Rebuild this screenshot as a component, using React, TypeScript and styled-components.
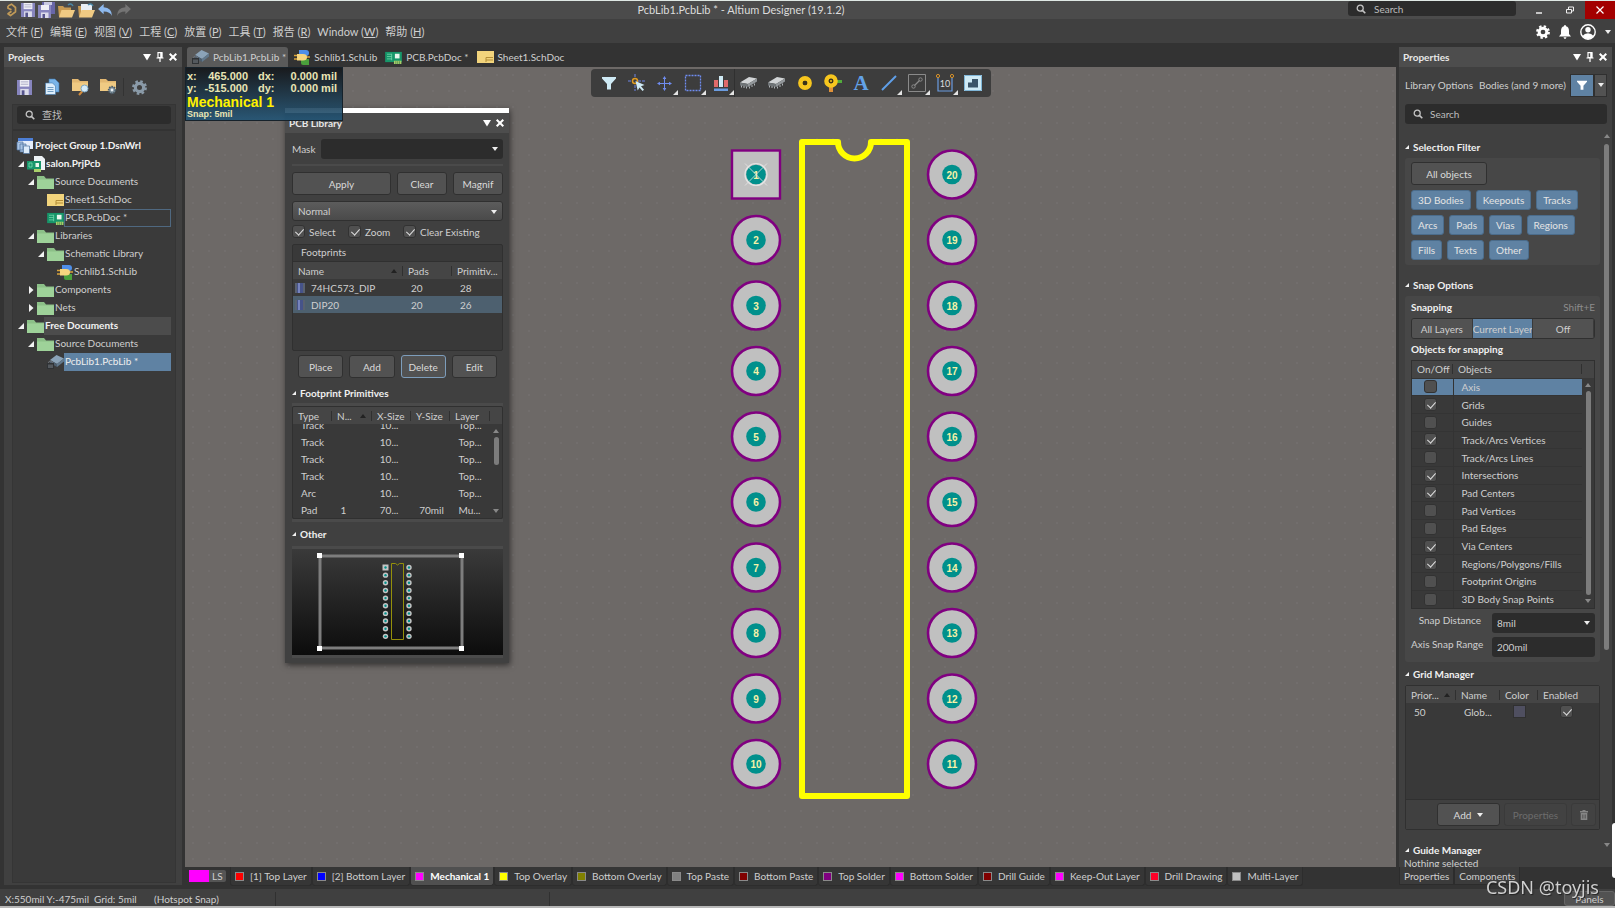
import React from "react";
import styled, { createGlobalStyle, css } from "styled-components";

const c = {
  chrome: "#404040",
  header: "#4d4d4d",
  dark: "#333333",
  deep: "#2c2c2c",
  list: "#393939",
  group: "#474747",
  button: "#525252",
  line: "#303030",
  blue: "#5f82a3",
  text: "#cfcfcf",
  dim: "#8c8c8c",
};

const Global = createGlobalStyle`
  * { box-sizing: border-box; }
  html, body { margin: 0; background: ${c.dark}; }
  body, button, input, select, table {
    font-family: Lato, "Noto Sans CJK SC", sans-serif;
    font-size: 10px;
    line-height: 14px;
    color: ${c.text};
  }
  button, input, select { margin: 0; padding: 0; border: 0; background: none; outline: none; }
  svg { display: block; flex: none; overflow: visible; }
`;

/* ---------- frame ---------- */

const Shell = styled.div`
  display: flex;
  flex-direction: column;
  height: 100vh;
  overflow: hidden;
  background: ${c.dark};
  border-top: 1px solid #dfe8e4;
  border-bottom: 2px solid #b8b8b8;
`;
const TitleBar = styled.header`
  display: grid;
  grid-template-columns: 1fr auto 1fr;
  align-items: center;
  height: 18px;
  flex: none;
  background: #4b4b4b;
`;
const QuickTools = styled.div`
  display: flex;
  align-items: center;
  gap: 3px;
  padding-left: 6px;
`;
const AppTitle = styled.h1`
  margin: 0 0 0 -133px;
  font-size: 11px;
  line-height: 16px;
  font-weight: 400;
  color: #dcdcdc;
`;
const TitleRight = styled.div`
  display: flex;
  justify-content: flex-end;
  align-items: stretch;
  height: 18px;
`;
const TitleSearch = styled.label`
  display: flex;
  align-items: center;
  gap: 8px;
  width: 168px;
  height: 15px;
  padding-left: 8px;
  margin-right: 7px;
  border-radius: 3px;
  background: ${c.deep};
`;
const WindowButton = styled.button<{ $danger?: boolean }>`
  display: flex;
  align-items: center;
  justify-content: center;
  width: ${(p) => (p.$danger ? 30 : 31)}px;
  background: ${(p) => (p.$danger ? "#a30000" : "transparent")};
`;
const MenuBar = styled.nav`
  display: flex;
  align-items: center;
  height: 24px;
  flex: none;
  padding: 1px 4px 0 6px;
  background: ${c.chrome};
`;
const MenuItem = styled.button`
  font-size: 11px;
  line-height: 16px;
  margin-right: 7px;
  white-space: nowrap;
`;
const MenuIcons = styled.div`
  display: flex;
  align-items: center;
  gap: 9px;
  margin-left: auto;
`;
const IconButton = styled.button`
  display: flex;
  align-items: center;
  justify-content: center;
`;
const Main = styled.main`
  display: flex;
  flex: 1;
  min-height: 0;
`;
const StatusBar = styled.footer`
  display: flex;
  align-items: center;
  height: 17px;
  flex: none;
  background: ${c.chrome};
  padding: 2px 0 0 5px;
`;
const StatusItem = styled.span<{ $w: number; $line?: boolean }>`
  width: ${(p) => p.$w}px;
  height: 14px;
  white-space: nowrap;
  border-right: 1px solid ${(p) => (p.$line ? c.line : "transparent")};
`;
const PanelsButton = styled.button`
  width: 51px;
  height: 15px;
  margin-left: auto;
  border: 1px solid #666;
  border-radius: 3px;
  background: ${c.button};
`;

/* ---------- panels ---------- */

const SidePanel = styled.aside<{ $w: number; $left: number }>`
  display: flex;
  flex-direction: column;
  flex: none;
  width: ${(p) => p.$w}px;
  padding: 4px 3px 4px ${(p) => p.$left}px;
`;
const PanelHeader = styled.div`
  display: flex;
  align-items: center;
  gap: 5px;
  height: 20px;
  flex: none;
  padding: 0 5px 0 4px;
  background: ${c.header};
`;
const PanelTitle = styled.h2`
  flex: 1;
  margin: 0;
  font-size: 10px;
  font-weight: 700;
  color: #e8e8e8;
`;
const PanelBody = styled.div`
  display: flex;
  flex-direction: column;
  flex: 1;
  min-height: 0;
  background: ${c.chrome};
`;
const ProjectTools = styled.div`
  display: flex;
  align-items: center;
  height: 37px;
  padding: 3px 0 0 6px;
  & > button { width: 28px; }
`;
const ToolDivider = styled.i`
  width: 1px;
  height: 18px;
  margin: 0 1px;
  background: #333;
`;
const TreeFrame = styled.div`
  flex: 1;
  margin: 0 6px 2px 8px;
  border: 1px solid #353535;
  background: #3a3a3a;
  overflow: hidden;
`;
const SearchField = styled.label<{ $h: number }>`
  display: flex;
  align-items: center;
  gap: 7px;
  height: ${(p) => p.$h}px;
  padding-left: 8px;
  border-radius: 3px;
  background: ${c.deep};
`;
const TextInput = styled.input`
  flex: 1;
  min-width: 0;
  &::placeholder { color: #bdbdbd; opacity: 1; }
`;
const SearchWrap = styled.div`
  padding: 1px 4px 5px;
  margin-bottom: 6px;
  border-bottom: 2px solid #333;
`;
const Tree = styled.ul`
  list-style: none;
  margin: 0;
  padding: 0 4px 0 4px;
`;
const TreeRow = styled.li<{ $level: number }>`
  display: flex;
  align-items: center;
  height: 18px;
  padding-left: ${(p) => p.$level * 10}px;
  white-space: nowrap;
`;
const TreeArrow = styled.span`
  display: flex;
  width: 10px;
  padding-left: 1px;
  flex: none;
`;
const TreeLabel = styled.span<{ $look?: string; $bold?: boolean }>`
  flex: 1;
  height: 18px;
  line-height: 15px;
  overflow: hidden;
  border: 1px solid transparent;
  font-weight: ${(p) => (p.$bold ? 700 : 400)};
  color: ${(p) => (p.$bold ? "#f2f2f2" : c.text)};
  ${(p) => p.$look === "outline" && css`border-color: #4f6880;`}
  ${(p) => p.$look === "shade" && css`background: #4c4c4c;`}
  ${(p) => p.$look === "active" && css`background: ${c.blue}; color: #eee;`}
`;

/* ---------- editor ---------- */

const Editor = styled.section`
  display: flex;
  flex-direction: column;
  flex: 1;
  min-width: 0;
`;
const DocTabs = styled.div`
  display: flex;
  height: 24px;
  flex: none;
  padding: 4px 0 0 2px;
`;
const DocTab = styled.button<{ $active?: boolean }>`
  display: flex;
  align-items: center;
  gap: 4px;
  padding: 0 2px 0 5px;
  margin-right: 1px;
  white-space: nowrap;
  border-radius: 3px 3px 0 0;
  background: ${(p) => (p.$active ? "#5a5a5a" : "transparent")};
`;
const Canvas = styled.div`
  position: relative;
  flex: 1;
  min-height: 0;
  background-color: #6d6967;
  background-image: radial-gradient(circle, #726e6d 0, #726e6d 1px, transparent 1px);
  background-size: 16px 16px;
`;
const Hud = styled.div`
  position: absolute;
  left: 0;
  top: 0;
  z-index: 3;
  width: 158px;
  height: 54px;
  padding: 2px 5px 0 1px;
  border: 1px solid #16222b;
  background: linear-gradient(rgba(22, 24, 27, 0.97), rgba(32, 84, 118, 0.88));
  color: #e9e5b4;
  font-family: "Liberation Sans", sans-serif;
  font-weight: 700;
`;
const HudGrid = styled.div`
  display: grid;
  grid-template-columns: 14px 47px 10px 24px 1fr;
  font-size: 11px;
  line-height: 12px;
  white-space: nowrap;
  & > :nth-child(4n + 2), & > :nth-child(4n) { text-align: right; }
  & > :nth-child(4n + 3) { grid-column: 4; }
`;
const HudLayer = styled.div`
  color: #fff200;
  font-size: 14px;
  line-height: 16px;
`;
const HudSnap = styled.div`
  font-size: 9px;
  line-height: 9px;
`;
const Toolbar = styled.div`
  position: absolute;
  top: 2px;
  left: 50%;
  transform: translateX(-50%);
  display: flex;
  height: 28px;
  padding: 0 4px;
  border-radius: 4px;
  background: #3d3d3d;
`;
const ToolButton = styled.button<{ $menu?: boolean; $divider?: boolean }>`
  position: relative;
  display: flex;
  align-items: center;
  justify-content: center;
  width: 28px;
  height: 28px;
  ${(p) => p.$menu && css`
    &::after {
      content: "";
      position: absolute;
      right: 1px;
      bottom: 2px;
      border-left: 5px solid transparent;
      border-bottom: 5px solid #e4e4e4;
    }
  `}
  ${(p) => p.$divider && css`box-shadow: -1px 0 0 #303030;`}
`;
const Footprint = styled.svg`
  position: absolute;
  left: 544px;
  top: 63px;
`;
const LayerBar = styled.div`
  display: flex;
  align-items: flex-start;
  height: 22px;
  flex: none;
  padding-left: 4px;
`;
const LayerSet = styled.button`
  display: flex;
  height: 12px;
  margin: 3px 4px 0 0;
  line-height: 12px;
  border-radius: 2px;
  background: #555;
`;
const LayerSetColor = styled.i`
  width: 20px;
  height: 12px;
  margin-right: 3px;
  background: #f0f;
`;
const LayerSetName = styled.span`
  width: 14px;
  text-align: left;
`;
const LayerTab = styled.button<{ $active?: boolean }>`
  display: flex;
  align-items: center;
  gap: 6px;
  height: 19px;
  padding: 0 4px;
  white-space: nowrap;
  border-radius: 0 0 3px 3px;
  border: 1px solid #2d2d2d;
  border-top: 0;
  background: ${(p) => (p.$active ? "#505050" : "#363636")};
  font-weight: ${(p) => (p.$active ? 700 : 400)};
  color: ${(p) => (p.$active ? "#fff" : c.text)};
`;
const Swatch = styled.i<{ $color: string }>`
  width: 9px;
  height: 9px;
  background: ${(p) => p.$color};
  border: 1px solid #8a8a8a;
`;

/* ---------- controls ---------- */

const Button = styled.button<{ $focus?: boolean; $w?: number; $off?: boolean }>`
  display: flex;
  align-items: center;
  justify-content: center;
  gap: 6px;
  height: 23px;
  flex: ${(p) => (p.$w ? "none" : "1")};
  width: ${(p) => (p.$w ? p.$w + "px" : "auto")};
  overflow: hidden;
  white-space: nowrap;
  border: 1px solid ${(p) => (p.$focus ? "#7d9dbb" : p.$off ? "#3a3a3a" : c.line)};
  border-radius: 3px;
  background: ${(p) => (p.$off ? "#424242" : c.button)};
  color: ${(p) => (p.$off ? "#6c6c6c" : "#dadada")};
`;
const SelectWrap = styled.div<{ $light?: boolean }>`
  position: relative;
  flex: 1;
  height: 20px;
  border-radius: 3px;
  background: ${(p) => (p.$light ? "linear-gradient(#5c5c5c, #4a4a4a)" : c.deep)};
  ${(p) => p.$light && css`border: 1px solid ${c.line};`}
  &::after {
    content: "";
    position: absolute;
    right: 5px;
    top: 8px;
    border: 3px solid transparent;
    border-top: 4px solid #eee;
    border-bottom: 0;
  }
`;
const Select = styled.select`
  appearance: none;
  width: 100%;
  height: 100%;
  padding-left: 5px;
`;
const Check = styled.input.attrs({ type: "checkbox" })`
  appearance: none;
  position: relative;
  flex: none;
  width: 13px;
  height: 13px;
  border: 1px solid #323232;
  border-radius: 3px;
  background: #505050;
  &:checked::after {
    content: "";
    position: absolute;
    left: 4px;
    top: 1px;
    width: 4px;
    height: 7px;
    border: solid #dedede;
    border-width: 0 1px 1px 0;
    transform: rotate(42deg);
  }
`;
const CheckLabel = styled.label<{ $w?: number }>`
  display: flex;
  align-items: center;
  gap: 4px;
  width: ${(p) => (p.$w ? p.$w + "px" : "auto")};
  white-space: nowrap;
`;
const SectionTitle = styled.h3`
  display: flex;
  align-items: center;
  gap: 4px;
  height: 14px;
  flex: none;
  margin: 0;
  font-size: 10px;
  font-weight: 700;
  color: #f0f0f0;
  white-space: nowrap;
`;
const Table = styled.table`
  width: 100%;
  border-collapse: collapse;
  table-layout: fixed;
`;
const Th = styled.th<{ $w?: number; $bare?: boolean }>`
  width: ${(p) => (p.$w ? p.$w + "px" : "auto")};
  height: 17px;
  padding: 0 0 0 5px;
  font-weight: 400;
  line-height: 14px;
  text-align: left;
  white-space: nowrap;
  background: linear-gradient(${c.line}, ${c.line}) right center / 1px 10px no-repeat, #454545;
  ${(p) => p.$bare && css`background: #454545;`}
`;
const SortHead = styled.span`
  display: flex;
  align-items: center;
  justify-content: space-between;
  padding-right: 6px;
`;
const Td = styled.td<{ $pad?: number }>`
  height: 17px;
  padding: 0 0 0 ${(p) => p.$pad ?? 8}px;
  line-height: 14px;
  white-space: nowrap;
`;
const ScrollTrack = styled.div`
  display: flex;
  flex-direction: column;
  align-items: center;
  width: 12px;
  padding: 5px 0 5px;
  gap: 4px;
`;
const ScrollThumb = styled.i<{ $h?: number }>`
  width: 5px;
  height: ${(p) => (p.$h ? p.$h + "px" : "auto")};
  flex: ${(p) => (p.$h ? "none" : "1")};
  border-radius: 3px;
  background: #7c7c7c;
`;
const Spacer = styled.i`
  flex: 1;
`;

/* ---------- library window ---------- */

const LibraryWindow = styled.section`
  position: absolute;
  left: 100px;
  top: 41px;
  z-index: 2;
  width: 224px;
  border-top: 5px solid #fff;
  background: ${c.chrome};
  box-shadow: 1px 2px 6px rgba(0, 0, 0, 0.55);
  padding-bottom: 5px;
`;
const LibraryBody = styled.div`
  display: flex;
  flex-direction: column;
  padding: 6px 6px 0 7px;
`;
const MaskRow = styled.label`
  display: flex;
  align-items: center;
  gap: 5px;
  padding-bottom: 5px;
  border-bottom: 2px solid #4a4a4a;
`;
const ButtonRow = styled.div<{ $top: number; $pad?: number }>`
  display: flex;
  gap: 6px;
  padding: 0 ${(p) => p.$pad ?? 0}px;
  margin-top: ${(p) => p.$top}px;
`;
const CheckRow = styled.div`
  display: flex;
  height: 13px;
  margin: 4px 0 6px;
`;
const ListBox = styled.div<{ $h: number }>`
  height: ${(p) => p.$h}px;
  overflow: hidden;
  border: 1px solid ${c.line};
  border-radius: 2px;
  background: ${c.list};
`;
const ListCaption = styled.div`
  height: 17px;
  padding: 0 0 0 8px;
  border-bottom: 1px solid ${c.line};
`;
const FootRow = styled.tr<{ $on?: boolean }>`
  background: ${(p) => (p.$on ? "#4d606f" : "transparent")};
`;
const NameCell = styled.span`
  display: flex;
  align-items: center;
  gap: 6px;
`;
const Rule = styled.i`
  display: block;
  height: 3px;
  background: #4a4a4a;
`;
const PrimBody = styled.div`
  display: flex;
  height: 94px;
  overflow: hidden;
`;
const PrimScroll = styled.div`
  flex: 1;
  display: flex;
  flex-direction: column;
  justify-content: flex-end;
`;
const Preview = styled.svg`
  width: 100%;
  height: 106px;
  background: linear-gradient(#3a3a3a, #0c0c0c);
`;

/* ---------- properties ---------- */

const ObjectLine = styled.div`
  display: flex;
  align-items: center;
  height: 24px;
  margin: 6px 4px 7px 6px;
  white-space: nowrap;
`;
const ObjectName = styled.span<{ $w: number }>`
  width: ${(p) => p.$w}px;
`;
const FilterButton = styled.button<{ $on?: boolean }>`
  display: flex;
  align-items: center;
  justify-content: center;
  width: ${(p) => (p.$on ? 24 : 13)}px;
  height: 23px;
  border: 1px solid ${c.line};
  background: ${(p) => (p.$on ? c.blue : c.button)};
`;
const PropsSearch = styled.div`
  margin: 0 5px 6px 6px;
`;
const PropsScroll = styled.div`
  display: flex;
  flex: 1;
  min-height: 0;
  padding-left: 6px;
`;
const PropsContent = styled.div`
  display: flex;
  flex-direction: column;
  width: 195px;
  overflow: hidden;
  padding-top: 10px;
`;
const PropsTrack = styled.div`
  display: flex;
  flex-direction: column;
  align-items: center;
  width: 11px;
  padding: 4px 0 10px 2px;
  gap: 6px;
`;
const Group = styled.div<{ $bottom: number }>`
  flex: none;
  margin: 4px 0 ${(p) => p.$bottom}px;
  padding: 4px 5px 5px 6px;
  border-radius: 3px;
  background: ${c.group};
`;
const ChipRow = styled.div`
  display: flex;
  gap: 5px;
  margin-top: 5px;
`;
const Chip = styled.button`
  height: 20px;
  padding: 0 6px;
  border: 1px solid #4b6c8b;
  border-radius: 3px;
  background: ${c.blue};
  color: #e4e4e4;
  white-space: nowrap;
`;
const Caption = styled.div`
  display: flex;
  justify-content: space-between;
  font-weight: 700;
  color: #f0f0f0;
`;
const Shortcut = styled.span`
  font-weight: 400;
  color: ${c.dim};
`;
const Segments = styled.div`
  display: grid;
  grid-template-columns: repeat(3, 1fr);
  height: 21px;
  margin: 4px 0 3px;
  border: 1px solid ${c.line};
  border-radius: 3px;
  overflow: hidden;
`;
const Segment = styled.button<{ $on?: boolean }>`
  overflow: hidden;
  white-space: nowrap;
  border-right: 1px solid #3a3a3a;
  background: ${(p) => (p.$on ? c.blue : c.button)};
`;
const SnapBox = styled.div`
  display: grid;
  grid-template-columns: 1fr 12px;
  grid-template-rows: 17px 230px;
  margin-top: 4px;
  border: 1px solid ${c.line};
  background: ${c.list};
`;
const SnapTable = styled(Table)`
  grid-row: 1 / 3;
  height: 247px;
`;
const HeadCorner = styled.div`
  background: #454545;
`;
const SnapRow = styled.tr<{ $on?: boolean }>`
  background: ${(p) => (p.$on ? c.blue : "transparent")};
  border-top: 1px solid #343434;
  & td:first-child { border-right: 1px solid #333; }
`;
const Centered = styled.span`
  display: flex;
  justify-content: center;
  padding-right: 4px;
`;
const FieldRow = styled.label`
  display: grid;
  grid-template-columns: 70px 103px;
  justify-content: space-between;
  height: 20px;
  margin-top: 4px;
  text-align: right;
  white-space: nowrap;
`;
const FieldInput = styled.input`
  height: 20px;
  width: 100%;
  padding-left: 5px;
  border-radius: 3px;
  background: ${c.deep};
`;
const GridBox = styled.div`
  flex: none;
  height: 145px;
  margin: 4px 0 13px;
  display: flex;
  flex-direction: column;
  border: 1px solid ${c.line};
  border-radius: 2px;
  background: ${c.list};
`;
const GridActions = styled.div`
  display: flex;
  justify-content: flex-end;
  gap: 4px;
  height: 30px;
  margin-top: auto;
  padding: 3px;
  border-top: 1px solid ${c.line};
  background: ${c.chrome};
`;
const ColorBox = styled.i`
  width: 13px;
  height: 13px;
  border: 1px solid #303030;
  background: #4f4f60;
`;
const Clipped = styled.p`
  height: 10px;
  margin: 0;
  padding-left: 5px;
  overflow: hidden;
  line-height: 12px;
  flex: none;
`;
const BottomTabs = styled.div`
  display: flex;
  height: 18px;
  flex: none;
`;
const BottomTab = styled.button`
  height: 18px;
  padding: 0 4px;
  border: 1px solid #2c2c2c;
  border-top: 0;
  background: #3b3b3b;
`;
const Watermark = styled.div`
  position: fixed;
  right: 16px;
  bottom: 9px;
  z-index: 5;
  font-family: "Noto Sans", sans-serif;
  font-size: 18px;
  line-height: 24px;
  color: #cfcfcf;
  text-shadow: 1px 1px 1px #222;
`;
const EdgeHandle = styled.div`
  position: fixed;
  right: 0;
  bottom: 30px;
  width: 3px;
  height: 55px;
  border-radius: 3px 0 0 3px;
  background: #fff;
`;

/* ---------- glyphs ---------- */

const Down = ({ s = 8, color = "#fff" }: { s?: number; color?: string }) => (
  <svg width={s} height={s} viewBox="0 0 8 8"><path d="M0 1h8L4 7.5z" fill={color} /></svg>
);
const Caret = ({ up, color = "#eee" }: { up?: boolean; color?: string }) => (
  <svg width="6" height="4" viewBox="0 0 6 4"><path d={up ? "M0 4h6L3 0z" : "M0 0h6L3 4z"} fill={color} /></svg>
);
const Cross = () => (
  <svg width="8" height="8" viewBox="0 0 8 8"><path d="M.7.7l6.6 6.6M7.3.7L.7 7.3" stroke="#fff" strokeWidth="2" /></svg>
);
const Pin = () => (
  <svg width="8" height="10" viewBox="0 0 8 10">
    <path d="M2 .7h4v5H2zM.5 6h7M4 6v4" stroke="#fff" fill="none" strokeWidth="1.2" />
    <path d="M4.2 1h2v5h-2z" fill="#fff" />
  </svg>
);
const Glass = () => (
  <svg width="10" height="10" viewBox="0 0 10 10">
    <circle cx="4.2" cy="4.2" r="3" fill="none" stroke="#c4c4c4" strokeWidth="1.3" />
    <path d="M6.4 6.4L9.3 9.3" stroke="#c4c4c4" strokeWidth="1.6" />
  </svg>
);
const Open = () => (
  <svg width="6" height="6" viewBox="0 0 6 6"><path d="M6 0v6H0z" fill="#f2f2f2" /></svg>
);
const Closed = () => (
  <svg width="6" height="8" viewBox="0 0 6 8"><path d="M1 0l4.500 4L1 8z" fill="#f2f2f2" /></svg>
);
const SmallOpen = () => (
  <svg width="4" height="4" viewBox="0 0 4 4"><path d="M4 0v4H0z" fill="#f2f2f2" /></svg>
);

const Floppy = ({ s = 15 }: { s?: number }) => (
  <svg width={s} height={s} viewBox="0 0 16 16">
    <path d="M0 0h16v16H0z" fill="#8785be" />
    <path d="M3 0h10v7H3z" fill="#efeff6" />
    <path d="M4 2h8M4 4.500h8" stroke="#a9a9c4" />
    <path d="M3.500 9.500h9V16h-9z" fill="#dcdcea" />
    <path d="M5 11h3v5H5z" fill="#55548c" />
  </svg>
);
const FloppyStack = () => (
  <svg width="17" height="16" viewBox="0 0 17 16">
    <path d="M4 0h13v12H4z" fill="#6866a8" />
    <path d="M6 0h8v3H6z" fill="#c9c9e2" />
    <path d="M0 3h13v13H0z" fill="#8785be" />
    <path d="M3 3h8v5H3z" fill="#efeff6" />
    <path d="M3 10.500h7.500V16H3z" fill="#dcdcea" />
    <path d="M4.500 12H7v4H4.500z" fill="#55548c" />
  </svg>
);
const Logo = () => (
  <svg width="12" height="14" viewBox="0 0 12 14">
    <path d="M2 3L5.500 1.200 9.500 4.500v4.300L4.500 12.600 2 10.800 5.500 8.200M2 3v2.200l3.500 1.600" fill="none" stroke="#c09a58" strokeWidth="1.700" strokeLinejoin="round" />
  </svg>
);
const OpenFolder = ({ page }: { page?: boolean }) => (
  <svg width="17" height="15" viewBox="0 0 17 15">
    <path d="M0 3h5l1.500 1.500H13V14H1z" fill="#c89a52" />
    {page && <path d="M3 1h11v9H3z" fill="#e9eef4" />}
    <path d="M3.500 7H17l-3 7.500H1z" fill="#f0ca83" />
    <path d="M10 2q3-2.500 5 1" stroke="#4b87a6" fill="none" strokeWidth="1.500" />
  </svg>
);
const UndoArrow = ({ flip }: { flip?: boolean }) => (
  <svg width="15" height="13" viewBox="0 0 16 14">
    <g transform={flip ? "translate(16 0) scale(-1 1)" : undefined}>
      <path d="M0 5.500L6 0v3.500q9 .5 9 9.500-2-5-9-5V11z" fill={flip ? "#747474" : "#8db8ec"} />
    </g>
  </svg>
);
const FolderIcon = () => (
  <svg width="17" height="13" viewBox="0 0 17 13">
    <path d="M0 0h7l2 2.500h8V13H0z" fill="#8cc088" />
    <path d="M0 3.500h17V13H0z" fill="#9ed299" />
  </svg>
);
const SheetIcon = () => (
  <svg width="17" height="12" viewBox="0 0 17 12">
    <path d="M0 0h17v12H0z" fill="#f2d47c" />
    <path d="M9 11V6.500h7M9 9h7" stroke="#b38d36" fill="none" />
  </svg>
);
const BoardIcon = () => (
  <svg width="17" height="13" viewBox="0 0 18 14">
    <path d="M0 1h18v11H0z" fill="#17966a" />
    <path d="M2 3.500h5M2 6h5M2 8.500h5M7 3v7" stroke="#7adcb0" strokeWidth=".8" />
    <path d="M10.500 3h5v5h-5z" fill="#e8f6ec" />
    <path d="M9.500 10.500h8V14h-8z" fill="#a9d06a" />
    <path d="M11.500 11v3M13.500 11v3M15.500 11v3" stroke="#3d7a4a" strokeWidth=".7" />
  </svg>
);
const GateIcon = () => (
  <svg width="16" height="15" viewBox="0 0 16 15">
    <path d="M5 0h7q3 0 3 3t-3 3H5z" fill="#4f8fe8" />
    <path d="M7 9h8v6H9q-2 0-2-2z" fill="#4aa03c" />
    <path d="M0 5.500h3M0 9h3M12 7h4" stroke="#d8a33b" strokeWidth="1.400" />
    <path d="M3 4h6q4 0 4 3.300T9 10.600H3z" fill="#f6d67e" />
  </svg>
);
const LibChip = () => (
  <svg width="17" height="14" viewBox="0 0 17 14">
    <path d="M3 5L9.500 0 17 3.500 10 9z" fill="#8ba3b8" />
    <path d="M3 5l7 4v3L3 8z" fill="#4d5e6e" />
    <path d="M17 3.500v3L10 12V9z" fill="#61788c" />
    <path d="M0 8h7v6H0z" fill="#2f3235" />
    <path d="M1 9.500h5v3.500H1z" fill="#54595e" />
    <path d="M1.500 8q0-2 2-2t2 2" stroke="#6d7278" fill="none" />
  </svg>
);
const GroupIcon = () => (
  <svg width="17" height="16" viewBox="0 0 17 16">
    <path d="M1 0h15v11H1z" fill="#e6eefb" />
    <path d="M1 0h15v3H1z" fill="#4d7fd6" />
    <path d="M0 4h6v8H0zM3 6h6v8H3z" fill="#a9c4e4" stroke="#4d719c" strokeWidth=".7" />
    <path d="M6.500 8h6v7.500h-6z" fill="#dcebfa" stroke="#4d719c" strokeWidth=".7" />
  </svg>
);
const ProjectIcon = () => (
  <svg width="18" height="16" viewBox="0 0 18 16">
    <path d="M7 0h8l3 3v11H7z" fill="#eef2f5" />
    <path d="M0 5h14v8.500H0z" fill="#17966a" />
    <path d="M2 7h3v4H2z" fill="none" stroke="#7adcb0" strokeWidth=".8" />
    <path d="M8.500 7H12v4H8.500z" fill="#e8f6ec" />
    <path d="M7 13h7v3H7z" fill="#a9d06a" />
  </svg>
);
const PagesIcon = () => (
  <svg width="15" height="16" viewBox="0 0 15 16">
    <path d="M4 0h6l4 4v9H4z" fill="#79b4e8" stroke="#3c75ab" strokeWidth=".6" />
    <path d="M0.500 4h7l3 3v8.500h-10z" fill="#dcedfb" stroke="#3c75ab" strokeWidth=".6" />
    <path d="M2.500 8.500h6M2.500 10.500h6M2.500 12.500h6" stroke="#5689b5" strokeWidth=".8" />
  </svg>
);
const TanFolder = ({ gear }: { gear?: boolean }) => (
  <svg width="17" height="16" viewBox="0 0 17 16">
    <path d="M0 0h6l2 2h8v10H0z" fill="#e3b872" />
    <path d="M0 3.500h16V12H0z" fill="#f0ca83" />
    {gear ? (
      <g><circle cx="12" cy="11" r="3.400" fill="#7d8f9b" stroke="#4a5a66" strokeWidth="1.600" strokeDasharray="1.500 1" /><circle cx="12" cy="11" r="1.400" fill="#e8eef2" /></g>
    ) : (
      <g><path d="M10.500 12L7 16" stroke="#d08a3c" strokeWidth="2" /><circle cx="12.500" cy="9.500" r="3.500" fill="#d6ecfa" stroke="#7da7c2" /></g>
    )}
  </svg>
);
const GearIcon = ({ s = 15, color = "#8a9aa8" }: { s?: number; color?: string }) => (
  <svg width={s} height={s} viewBox="0 0 16 16">
    <circle cx="8" cy="8" r="6.600" fill="none" stroke={color} strokeWidth="2.600" strokeDasharray="2.700 2.480" />
    <circle cx="8" cy="8" r="4.400" fill="none" stroke={color} strokeWidth="3.400" />
  </svg>
);
const Funnel = ({ s = 14, color = "#cfeaf5" }: { s?: number; color?: string }) => (
  <svg width={s} height={s} viewBox="0 0 14 14"><path d="M0 1h14v1.500L9 8v5.500H5V8L0 2.500z" fill={color} /></svg>
);

const tools: { name: string; menu?: boolean; divider?: boolean; art: React.ReactNode }[] = [
  { name: "Filter", art: <Funnel /> },
  {
    name: "Select overlapped",
    art: (
      <svg width="18" height="18" viewBox="0 0 18 18">
        <path d="M0 7h4M10 7h7M7 0v3M7 11v6" stroke="#6f86e8" strokeDasharray="3 1" />
        <circle cx="7" cy="7" r="2.500" fill="none" stroke="#e09a20" strokeWidth="1.500" />
        <path d="M7.500 7l9 4-3.500 1.300 3 3.500-1.500 1.300-3-3.600-1.800 3z" fill="#cfeaf5" />
      </svg>
    ),
  },
  {
    name: "Move", menu: true,
    art: (
      <svg width="15" height="15" viewBox="0 0 15 15">
        <path d="M7.500 1v13M1 7.500h13" stroke="#6f8cf0" />
        <path d="M7.500 0l1.800 3H5.700zM7.500 15l1.800-3H5.700zM0 7.500l3-1.800v3.600zM15 7.500l-3-1.800v3.600z" fill="#6f8cf0" />
      </svg>
    ),
  },
  {
    name: "Select area", menu: true,
    art: <svg width="16" height="16" viewBox="0 0 16 16"><path d="M.5.5h15v15H.5z" fill="none" stroke="#6f8cf0" strokeWidth="1.300" strokeDasharray="2 1" /></svg>,
  },
  {
    name: "Align", menu: true,
    art: (
      <svg width="14" height="15" viewBox="0 0 14 15">
        <path d="M0 4h4v7H0zM10 4h4v7h-4z" fill="#e06a6a" /><path d="M5 0h4v11H5z" fill="#cfeaf5" /><path d="M0 12.500h14V15H0z" fill="#6b9ce0" />
      </svg>
    ),
  },
  ...["Component body", "Extruded body"].map((name, i) => ({
    name, divider: i === 0,
    art: (
      <svg width="17" height="12" viewBox="0 0 17 12">
        <path d="M0 5.500L9 0l8 1.500L8 7z" fill="#d2d5d7" />
        <path d="M0 5.500L8 7v3L0 8.500z" fill="#6f7477" />
        <path d="M8 7l9-5.500v3L8 10z" fill="#92979a" />
        <path d="M1.500 8.500v2M4 9v2M6.500 9.500v2M9.500 9.500v2M12 8v2M14.500 6.500v2" stroke="#aeb3b6" />
      </svg>
    ),
  })),
  {
    name: "Via",
    art: <svg width="14" height="14" viewBox="0 0 14 14"><circle cx="7" cy="7" r="4.600" fill="none" stroke="#f7c61e" strokeWidth="4.600" /><circle cx="7" cy="7" r="2.300" fill="#3c3318" /></svg>,
  },
  {
    name: "Pad",
    art: (
      <svg width="18" height="18" viewBox="0 0 18 18">
        <path d="M10 6h8v3h-8z" fill="#52ac3c" /><path d="M5 10h4v8H5z" fill="#e0923a" />
        <circle cx="7" cy="7" r="4.600" fill="none" stroke="#f7c61e" strokeWidth="4.400" /><circle cx="7" cy="7" r="2.300" fill="#3c3318" /><circle cx="7" cy="7" r="1" fill="#f7c61e" />
      </svg>
    ),
  },
  {
    name: "String",
    art: <svg width="16" height="16" viewBox="0 0 16 16"><text x="8" y="15" textAnchor="middle" fontFamily="Liberation Serif" fontWeight="700" fontSize="21" fill="#62a2e8">A</text></svg>,
  },
  { name: "Line", menu: true, art: <svg width="16" height="16" viewBox="0 0 16 16"><path d="M1 15L15 1" stroke="#5f9fe8" strokeWidth="2" /></svg> },
  {
    name: "Measure", menu: true,
    art: (
      <svg width="18" height="18" viewBox="0 0 18 18">
        <path d="M.5.5h17v17H.5z" fill="none" stroke="#8a8a8a" /><path d="M6.500 11.500l5-5" stroke="#8a8a8a" strokeWidth="1.300" />
        <circle cx="5.500" cy="12.500" r="1.700" fill="none" stroke="#8a8a8a" /><circle cx="12.500" cy="5.500" r="1.700" fill="none" stroke="#8a8a8a" />
      </svg>
    ),
  },
  {
    name: "Dimension", menu: true,
    art: (
      <svg width="18" height="18" viewBox="0 0 18 18">
        <path d="M2 4v13h14V4" fill="none" stroke="#6b9ce0" strokeWidth="1.200" />
        <circle cx="2" cy="2" r="1.600" fill="none" stroke="#d8922a" /><circle cx="16" cy="2" r="1.600" fill="none" stroke="#d8922a" />
        <text x="9" y="13" textAnchor="middle" fontSize="9" fill="#dcdcdc">10</text>
      </svg>
    ),
  },
  {
    name: "Region",
    art: (
      <svg width="18" height="16" viewBox="0 0 18 16">
        <path d="M0 0h18v16H0z" fill="#cfeaf5" /><path d="M4 7.500h4V4h6v8.500H4z" fill="#3b5468" /><path d="M.5.5h17v15H.5z" fill="none" stroke="#7fb6d8" />
      </svg>
    ),
  },
];

/* ---------- data ---------- */

const menus = [["文件", "F"], ["编辑", "E"], ["视图", "V"], ["工程", "C"], ["放置", "P"], ["工具", "T"], ["报告", "R"], ["Window", "W"], ["帮助", "H"]];

const tree: { t: string; l: number; icon: React.ReactNode; a?: "open" | "closed"; bold?: boolean; look?: string }[] = [
  { t: "Project Group 1.DsnWrl", l: 0, icon: <GroupIcon />, bold: true },
  { t: "salon.PrjPcb", l: 0, a: "open", icon: <ProjectIcon />, bold: true },
  { t: "Source Documents", l: 1, a: "open", icon: <FolderIcon /> },
  { t: "Sheet1.SchDoc", l: 3, icon: <SheetIcon /> },
  { t: "PCB.PcbDoc *", l: 3, icon: <BoardIcon />, look: "outline" },
  { t: "Libraries", l: 1, a: "open", icon: <FolderIcon /> },
  { t: "Schematic Library", l: 2, a: "open", icon: <FolderIcon /> },
  { t: "Schlib1.SchLib", l: 4, icon: <GateIcon /> },
  { t: "Components", l: 1, a: "closed", icon: <FolderIcon /> },
  { t: "Nets", l: 1, a: "closed", icon: <FolderIcon /> },
  { t: "Free Documents", l: 0, a: "open", icon: <FolderIcon />, bold: true, look: "shade" },
  { t: "Source Documents", l: 1, a: "open", icon: <FolderIcon /> },
  { t: "PcbLib1.PcbLib *", l: 3, icon: <LibChip />, look: "active" },
];

const layers = [
  ["[1] Top Layer", "#ff0000"], ["[2] Bottom Layer", "#0000ff"], ["Mechanical 1", "#ff00ff"], ["Top Overlay", "#ffff00"],
  ["Bottom Overlay", "#808000"], ["Top Paste", "#808080"], ["Bottom Paste", "#800000"], ["Top Solder", "#800080"],
  ["Bottom Solder", "#ff00ff"], ["Drill Guide", "#800000"], ["Keep-Out Layer", "#ff00ff"], ["Drill Drawing", "#ff0028"], ["Multi-Layer", "#c0c0c0"],
];

const snaps: [string, boolean][] = [
  ["Axis", false], ["Grids", true], ["Guides", false], ["Track/Arcs Vertices", true], ["Track/Arcs Lines", false],
  ["Intersections", true], ["Pad Centers", true], ["Pad Vertices", false], ["Pad Edges", false], ["Via Centers", true],
  ["Regions/Polygons/Fills", true], ["Footprint Origins", false], ["3D Body Snap Points", false],
];

const prims = [
  ["Track", "", "10...", "", "Top..."], ["Track", "", "10...", "", "Top..."], ["Track", "", "10...", "", "Top..."],
  ["Track", "", "10...", "", "Top..."], ["Arc", "", "10...", "", "Top..."], ["Pad", "1", "70...", "70mil", "Mu..."],
];

const chips = [["3D Bodies", "Keepouts", "Tracks"], ["Arcs", "Pads", "Vias", "Regions"], ["Fills", "Texts", "Other"]];

const rows = Array.from({ length: 10 }, (_, i) => i);

/* ---------- parts ---------- */

function FootprintDrawing() {
  return (
    <Footprint width="250" height="680" viewBox="729 130 250 680" role="img" aria-label="DIP20 footprint">
      <path d="M802 142h36a16.500 16.500 0 0 0 33 0h36v654H802z" fill="none" stroke="#ffff00" strokeWidth="6" strokeLinejoin="round" />
      {rows.flatMap((i) =>
        [756, 952].map((x, side) => {
          const y = 174.500 + i * 65.500;
          const n = side ? 20 - i : i + 1;
          return (
            <g key={n}>
              {n === 1
                ? <rect x={x - 24} y={y - 24} width="48" height="48" fill="#c0c0c0" stroke="#800080" strokeWidth="2.400" />
                : <circle cx={x} cy={y} r="24" fill="#c0c0c0" stroke="#800080" strokeWidth="2.600" />}
              <circle cx={x} cy={y} r="9.800" fill="#00908c" />
              <text x={x} y={y + 4} textAnchor="middle" fontFamily="Liberation Sans" fontWeight="700" fontSize="10" fill="#f6f2a8">{n}</text>
              {n === 1 && (
                <g stroke="#e4e4e4" fill="none">
                  <circle cx={x} cy={y} r="11" strokeWidth="1.200" />
                  <path d={`M${x - 11} ${y - 11}l22 22M${x + 11} ${y - 11}l-22 22`} strokeWidth=".8" />
                </g>
              )}
            </g>
          );
        })
      )}
    </Footprint>
  );
}

function PreviewDrawing() {
  return (
    <Preview viewBox="0 0 211 106" role="img" aria-label="Footprint preview">
      <path d="M28 7h142v92H28z" fill="none" stroke="#7d7d7d" strokeWidth="3" />
      {[[27, 6], [169, 6], [27, 99], [169, 99]].map(([x, y]) => (
        <rect key={`${x}-${y}`} x={x - 2} y={y - 2} width="5" height="5" fill="#fff" />
      ))}
      <path d="M99.500 14.500h4q2 3 4 0h4v76h-12z" fill="none" stroke="#94900a" />
      {rows.flatMap((i) =>
        [93.500, 117].map((x, side) => {
          const y = 18.500 + i * 7.650;
          return (
            <g key={`${x}-${i}`}>
              {!side && !i ? <rect x={x - 3} y={y - 3} width="6" height="6" fill="#c4c4c4" /> : <circle cx={x} cy={y} r="2.700" fill="#c4c4c4" />}
              <circle cx={x} cy={y} r="1.200" fill="#00908c" />
            </g>
          );
        })
      )}
    </Preview>
  );
}

function LibraryPanel() {
  return (
    <LibraryWindow>
      <PanelHeader>
        <PanelTitle>PCB Library</PanelTitle>
        <IconButton aria-label="Panel menu"><Down /></IconButton>
        <IconButton aria-label="Close"><Cross /></IconButton>
      </PanelHeader>
      <LibraryBody>
        <MaskRow>
          Mask
          <SelectWrap><Select aria-label="Mask"><option></option></Select></SelectWrap>
        </MaskRow>
        <ButtonRow $top={6}>
          <Button>Apply</Button>
          <Button $w={50}>Clear</Button>
          <Button $w={50}>Magnif</Button>
        </ButtonRow>
        <ButtonRow $top={6}>
          <SelectWrap $light><Select aria-label="Mode"><option>Normal</option></Select></SelectWrap>
        </ButtonRow>
        <CheckRow>
          <CheckLabel $w={56}><Check defaultChecked />Select</CheckLabel>
          <CheckLabel $w={55}><Check defaultChecked />Zoom</CheckLabel>
          <CheckLabel><Check defaultChecked />Clear Existing</CheckLabel>
        </CheckRow>
        <ListBox $h={107}>
          <ListCaption>Footprints</ListCaption>
          <Table>
            <thead>
              <tr>
                <Th $w={110}><SortHead>Name<Caret up color="#222" /></SortHead></Th>
                <Th $w={49}>Pads</Th>
                <Th $bare>Primitiv...</Th>
              </tr>
            </thead>
            <tbody>
              {[["74HC573_DIP", "20", "28"], ["DIP20", "20", "26"]].map(([n, p, q]) => (
                <FootRow key={n} $on={n === "DIP20"}>
                  <Td $pad={2}>
                    <NameCell>
                      <svg width="10" height="10" viewBox="0 0 10 10"><path d="M0 0h2v10H0zM8 0h2v10H8z" fill="#5a6270" /><path d="M2 0h6v10H2z" fill="#46538a" /><path d="M3 0h2v10H3z" fill="#7683bd" /></svg>
                      {n}
                    </NameCell>
                  </Td>
                  <Td>{p}</Td>
                  <Td>{q}</Td>
                </FootRow>
              ))}
            </tbody>
          </Table>
        </ListBox>
        <ButtonRow $top={4} $pad={6}>
          <Button>Place</Button>
          <Button>Add</Button>
          <Button $focus>Delete</Button>
          <Button>Edit</Button>
        </ButtonRow>
        <ButtonRow $top={8}><SectionTitle><SmallOpen />Footprint Primitives</SectionTitle></ButtonRow>
        <ButtonRow $top={3} />
        <Rule />
        <ListBox $h={113}>
          <Table>
            <thead>
              <tr>
                <Th $w={39}>Type</Th>
                <Th $w={40}><SortHead>N...<Caret up color="#222" /></SortHead></Th>
                <Th $w={39}>X-Size</Th>
                <Th $w={39}>Y-Size</Th>
                <Th $w={40}>Layer</Th>
                <Th $bare aria-label="Scroll" />
              </tr>
            </thead>
          </Table>
          <PrimBody>
            <PrimScroll>
              <Table>
                <tbody>
                  {prims.map((r, i) => (
                    <tr key={i}>{r.map((v, k) => <Td key={k}>{v}</Td>)}</tr>
                  ))}
                </tbody>
              </Table>
            </PrimScroll>
            <ScrollTrack>
              <Caret up color="#888" />
              <ScrollThumb $h={28} />
              <Spacer />
              <Caret color="#888" />
            </ScrollTrack>
          </PrimBody>
        </ListBox>
        <Rule />
        <ButtonRow $top={5}><SectionTitle><SmallOpen />Other</SectionTitle></ButtonRow>
        <ButtonRow $top={5} />
        <Rule />
        <PreviewDrawing />
        <Rule />
      </LibraryBody>
    </LibraryWindow>
  );
}

function PropertiesPanel() {
  return (
    <SidePanel $w={219} $left={3}>
      <PanelHeader>
        <PanelTitle>Properties</PanelTitle>
        <IconButton aria-label="Panel menu"><Down /></IconButton>
        <IconButton aria-label="Pin"><Pin /></IconButton>
        <IconButton aria-label="Close"><Cross /></IconButton>
      </PanelHeader>
      <PanelBody>
        <ObjectLine>
          <ObjectName $w={74}>Library Options</ObjectName>
          <ObjectName $w={91}>Bodies (and 9 more)</ObjectName>
          <FilterButton $on aria-label="Filter"><Funnel s={10} color="#fff" /></FilterButton>
          <FilterButton aria-label="Filter options"><Caret /></FilterButton>
        </ObjectLine>
        <PropsSearch>
          <SearchField $h={20}><Glass /><TextInput aria-label="Search properties" placeholder="Search" /></SearchField>
        </PropsSearch>
        <PropsScroll>
          <PropsContent>
            <SectionTitle><SmallOpen />Selection Filter</SectionTitle>
            <Group $bottom={13}>
              <Button $w={76}>All objects</Button>
              {chips.map((line) => (
                <ChipRow key={line[0]}>{line.map((t) => <Chip key={t}>{t}</Chip>)}</ChipRow>
              ))}
            </Group>
            <SectionTitle><SmallOpen />Snap Options</SectionTitle>
            <Group $bottom={5}>
              <Caption>Snapping<Shortcut>Shift+E</Shortcut></Caption>
              <Segments>
                <Segment>All Layers</Segment>
                <Segment $on>Current Layer</Segment>
                <Segment>Off</Segment>
              </Segments>
              <Caption>Objects for snapping</Caption>
              <SnapBox>
                <SnapTable>
                  <thead>
                    <tr><Th $w={41}>On/Off</Th><Th>Objects</Th></tr>
                  </thead>
                  <tbody>
                    {snaps.map(([t, on], i) => (
                      <SnapRow key={t} $on={i === 0}>
                        <Td $pad={0}><Centered><Check aria-label={t} defaultChecked={on} /></Centered></Td>
                        <Td>{t}</Td>
                      </SnapRow>
                    ))}
                  </tbody>
                </SnapTable>
                <HeadCorner />
                <ScrollTrack>
                  <Caret up color="#888" />
                  <ScrollThumb />
                  <Caret color="#888" />
                </ScrollTrack>
              </SnapBox>
              <FieldRow>Snap Distance<SelectWrap><Select><option>8mil</option></Select></SelectWrap></FieldRow>
              <FieldRow>Axis Snap Range<FieldInput defaultValue="200mil" /></FieldRow>
            </Group>
            <SectionTitle><SmallOpen />Grid Manager</SectionTitle>
            <GridBox>
              <Table>
                <thead>
                  <tr>
                    <Th $w={50}><SortHead>Prior...<Caret up color="#222" /></SortHead></Th>
                    <Th $w={44}>Name</Th>
                    <Th $w={38}>Color</Th>
                    <Th $bare>Enabled</Th>
                  </tr>
                </thead>
                <tbody>
                  <tr>
                    <Td>50</Td>
                    <Td>Glob...</Td>
                    <Td $pad={4}><Centered><ColorBox /></Centered></Td>
                    <Td $pad={0}><Centered><Check aria-label="Enabled" defaultChecked /></Centered></Td>
                  </tr>
                </tbody>
              </Table>
              <GridActions>
                <Button $w={63}>Add<Caret /></Button>
                <Button $w={63} $off>Properties</Button>
                <Button $w={25} $off aria-label="Delete grid">
                  <svg width="8" height="10" viewBox="0 0 8 10"><path d="M0 1h8v1.500H0zM2.500 0h3v1h-3zM.7 3h6.600v7H.7z" fill="#858585" /><path d="M2.500 4.500v4M4 4.500v4M5.500 4.500v4" stroke="#4a4a4a" strokeWidth=".6" /></svg>
                </Button>
              </GridActions>
            </GridBox>
            <SectionTitle><SmallOpen />Guide Manager</SectionTitle>
          </PropsContent>
          <PropsTrack>
            <Caret up color="#888" />
            <ScrollThumb $h={506} />
            <Spacer />
            <Caret color="#888" />
          </PropsTrack>
        </PropsScroll>
        <Clipped>Nothing selected</Clipped>
      </PanelBody>
      <BottomTabs>
        <BottomTab>Properties</BottomTab>
        <BottomTab>Components</BottomTab>
      </BottomTabs>
    </SidePanel>
  );
}

function ProjectsPanel() {
  return (
    <SidePanel $w={185} $left={4}>
      <PanelHeader>
        <PanelTitle>Projects</PanelTitle>
        <IconButton aria-label="Panel menu"><Down /></IconButton>
        <IconButton aria-label="Pin"><Pin /></IconButton>
        <IconButton aria-label="Close"><Cross /></IconButton>
      </PanelHeader>
      <PanelBody>
        <ProjectTools>
          <IconButton aria-label="Save"><Floppy /></IconButton>
          <IconButton aria-label="Compile"><PagesIcon /></IconButton>
          <IconButton aria-label="Browse"><TanFolder /></IconButton>
          <IconButton aria-label="Options"><TanFolder gear /></IconButton>
          <ToolDivider />
          <IconButton aria-label="Settings"><GearIcon /></IconButton>
        </ProjectTools>
        <TreeFrame>
          <SearchWrap>
            <SearchField $h={18}><Glass /><TextInput aria-label="查找" placeholder="查找" /></SearchField>
          </SearchWrap>
          <Tree>
            {tree.map((n, i) => (
              <TreeRow key={i} $level={n.l}>
                {n.a && <TreeArrow>{n.a === "open" ? <Open /> : <Closed />}</TreeArrow>}
                {n.icon}
                <TreeLabel $bold={n.bold} $look={n.look}>{n.t}</TreeLabel>
              </TreeRow>
            ))}
          </Tree>
        </TreeFrame>
      </PanelBody>
    </SidePanel>
  );
}

export default function App() {
  return (
    <>
      <Global />
      <Shell>
        <TitleBar>
          <QuickTools>
            <Logo />
            <IconButton aria-label="Save"><Floppy s={14} /></IconButton>
            <IconButton aria-label="Save all"><FloppyStack /></IconButton>
            <IconButton aria-label="Open"><OpenFolder /></IconButton>
            <IconButton aria-label="Open project"><OpenFolder page /></IconButton>
            <IconButton aria-label="Undo"><UndoArrow /></IconButton>
            <IconButton aria-label="Redo"><UndoArrow flip /></IconButton>
          </QuickTools>
          <AppTitle>PcbLib1.PcbLib * - Altium Designer (19.1.2)</AppTitle>
          <TitleRight>
            <TitleSearch><Glass /><TextInput aria-label="Search" placeholder="Search" /></TitleSearch>
            <WindowButton aria-label="Minimise"><svg width="6" height="8" viewBox="0 0 6 8"><path d="M0 7h6" stroke="#eee" strokeWidth="1.500" /></svg></WindowButton>
            <WindowButton aria-label="Restore"><svg width="8" height="8" viewBox="0 0 8 8"><path d="M.5 3.500h5v3.500h-5zM2.500 3V1h5v4H6" fill="none" stroke="#eee" /></svg></WindowButton>
            <WindowButton $danger aria-label="Close"><svg width="8" height="8" viewBox="0 0 8 8"><path d="M.5.5l7 7M7.500.5l-7 7" stroke="#fff" strokeWidth="1.200" /></svg></WindowButton>
          </TitleRight>
        </TitleBar>
        <MenuBar>
          {menus.map(([t, k]) => (
            <MenuItem key={k}>{t} (<u>{k}</u>)</MenuItem>
          ))}
          <MenuIcons>
            <IconButton aria-label="Settings"><GearIcon s={14} color="#fff" /></IconButton>
            <IconButton aria-label="Notifications"><svg width="12" height="14" viewBox="0 0 12 14"><path d="M6 0q1 0 1 1.300Q10 2 10 6v3l2 2.500H0L2 9V6q0-4 3-4.700Q5 0 6 0zM4.500 12.300h3Q7 14 6 14t-1.500-1.700z" fill="#fff" /></svg></IconButton>
            <IconButton aria-label="Account"><svg width="16" height="16" viewBox="0 0 16 16"><circle cx="8" cy="8" r="7.200" fill="none" stroke="#fff" strokeWidth="1.400" /><circle cx="8" cy="5.800" r="2.700" fill="#fff" /><path d="M2.500 12q2-2.700 5.500-2.700t5.500 2.700Q11.500 15 8 15t-5.500-3z" fill="#fff" /></svg></IconButton>
            <IconButton aria-label="Account menu"><Caret /></IconButton>
          </MenuIcons>
        </MenuBar>
        <Main>
          <ProjectsPanel />
          <Editor>
            <DocTabs>
              <DocTab $active><LibChip />PcbLib1.PcbLib *</DocTab>
              <DocTab><GateIcon />Schlib1.SchLib</DocTab>
              <DocTab><BoardIcon />PCB.PcbDoc *</DocTab>
              <DocTab><SheetIcon />Sheet1.SchDoc</DocTab>
            </DocTabs>
            <Canvas>
              <Hud>
                <HudGrid>
                  <span>x:</span><span>465.000</span><span>dx:</span><span>0.000 mil</span>
                  <span>y:</span><span>-515.000</span><span>dy:</span><span>0.000 mil</span>
                </HudGrid>
                <HudLayer>Mechanical 1</HudLayer>
                <HudSnap>Snap: 5mil</HudSnap>
              </Hud>
              <Toolbar>
                {tools.map((t) => (
                  <ToolButton key={t.name} aria-label={t.name} $menu={t.menu} $divider={t.divider}>{t.art}</ToolButton>
                ))}
              </Toolbar>
              <LibraryPanel />
              <FootprintDrawing />
            </Canvas>
            <LayerBar>
              <LayerSet><LayerSetColor /><LayerSetName>LS</LayerSetName></LayerSet>
              {layers.map(([t, color]) => (
                <LayerTab key={t} $active={t === "Mechanical 1"}><Swatch $color={color} />{t}</LayerTab>
              ))}
            </LayerBar>
          </Editor>
          <PropertiesPanel />
        </Main>
        <StatusBar>
          <StatusItem $w={89}>X:550mil Y:-475mil</StatusItem>
          <StatusItem $w={60}>Grid: 5mil</StatusItem>
          <StatusItem $w={122} $line>(Hotspot Snap)</StatusItem>
          <StatusItem $w={274} $line />
          <PanelsButton>Panels</PanelsButton>
        </StatusBar>
      </Shell>
      <Watermark>CSDN @toyjis</Watermark>
      <EdgeHandle />
    </>
  );
}
